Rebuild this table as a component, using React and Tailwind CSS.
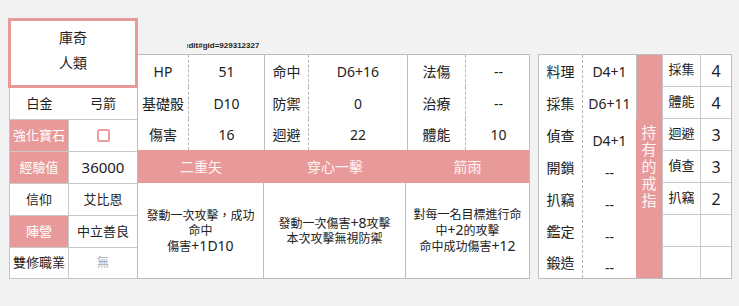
import React from 'react';

const PINK = 'bg-[#e89a9a]';

const stats = [
  [['HP', '51'], ['命中', 'D6+16'], ['法傷', '--']],
  [['基礎骰', 'D10'], ['防禦', '0'], ['治療', '--']],
  [['傷害', '16'], ['迴避', '22'], ['體能', '10']],
];

const groupWidths = [
  ['w-[51px]', 'w-[75px]'],
  ['w-[44px]', 'w-[98px]'],
  ['w-[58px]', 'w-[65px]'],
];

const skills = [
  { name: '二重矢', w: 'w-[126px]' },
  { name: '穿心一擊', w: 'w-[142px]' },
  { name: '箭雨', w: 'w-[123px]' },
];

const jobSkills = ['料理', '採集', '偵查', '開鎖', '扒竊', '鑑定', '鍛造'];
const jobValues = ['D4+1', 'D6+11', 'D4+1', '--', '--', '--', '--'];

const ringBonus = [
  ['採集', '4'],
  ['體能', '4'],
  ['迴避', '3'],
  ['偵查', '3'],
  ['扒竊', '2'],
  ['', ''],
  ['', ''],
];

const Num = ({ children }) => <span className="text-[14px]">{children}</span>;

function ProfileColumn() {
  return (
    <div className="w-[130px] flex flex-col">
      <div className="relative z-10 h-[70px] border-[3px] border-[#e89a9a] bg-white flex flex-col items-center text-[14px] leading-[20px] pt-[7px]">
        <div>庫奇</div>
        <div className="mt-[5px]">人類</div>
      </div>
      <div className="ml-px w-[128px] border-l border-[#c4c4c4] bg-white text-[13px]">
        <div className="h-[32px] flex border-b border-[#c8c8c8]">
          <div className="w-[59px] flex items-center justify-center">白金</div>
          <div className="flex-1 flex items-center justify-center">弓箭</div>
        </div>
        <div className="h-[32px] flex border-b border-[#c8c8c8]">
          <div className={`w-[59px] ${PINK} text-white border-r border-[#c8c8c8] flex items-center justify-center`}>強化寶石</div>
          <div className="flex-1 flex items-center justify-center">
            <div className="w-[13px] h-[13px] border-2 border-[#ee9d9d] rounded-[2px] bg-white" />
          </div>
        </div>
        <div className="h-[32px] flex border-b border-[#c8c8c8]">
          <div className={`w-[59px] ${PINK} text-white border-r border-[#c8c8c8] flex items-center justify-center`}>經驗值</div>
          <div className="flex-1 flex items-center justify-center text-[15px]">36000</div>
        </div>
        <div className="h-[32px] flex border-b border-[#c8c8c8]">
          <div className="w-[59px] border-r border-[#c8c8c8] flex items-center justify-center">信仰</div>
          <div className="flex-1 flex items-center justify-center">艾比恩</div>
        </div>
        <div className="h-[32px] flex border-b border-[#c8c8c8]">
          <div className={`w-[59px] ${PINK} text-white border-r border-[#c8c8c8] flex items-center justify-center`}>陣營</div>
          <div className="flex-1 flex items-center justify-center">中立善良</div>
        </div>
        <div className="h-[31px] flex border-b border-[#c4c4c4]">
          <div className="w-[59px] border-r border-[#c8c8c8] flex items-center justify-center">雙修職業</div>
          <div className="flex-1 flex items-center justify-center text-[12px] text-[#aaa]">無</div>
        </div>
      </div>
    </div>
  );
}

function CombatTable() {
  return (
    <div className="-ml-px w-[393px] flex flex-col">
      <div className="h-[36px] flex items-end pb-[4px] pl-[50px]">
        <div className="overflow-hidden">
          <div className="-ml-[3px] text-[8px] leading-[8px] font-bold font-['Liberation_Sans',sans-serif] text-[#222]">edit#gid=929312327</div>
        </div>
      </div>
      <div className="border border-[#bdbdbd] bg-white">
        {stats.map((row, i) => (
          <div key={i} className={`flex ${i === 2 ? 'h-[31px]' : 'h-[32px]'}`}>
            {row.map(([label, value], g) => (
              <div key={label} className={`flex ${g < 2 ? 'border-r border-[#bdbdbd]' : ''}`}>
                <div className={`${groupWidths[g][0]} border-r border-dashed border-[#b5b5b5] flex items-center justify-center text-[14px]`}>
                  {label}
                </div>
                <div className={`${g < 2 ? 'flex-1' : ''} ${groupWidths[g][1]} flex items-center justify-center text-[14px]`}>
                  {value}
                </div>
              </div>
            ))}
          </div>
        ))}
        <div className={`h-[33px] flex ${PINK} text-[14px] text-[#fff4f4]`}>
          {skills.map((s) => (
            <div key={s.name} className={`${s.w} flex items-center justify-center`}>{s.name}</div>
          ))}
        </div>
        <div className="h-[95px] flex text-[12px] leading-[15px] text-center">
          <div className="w-[126px] border-r border-[#bdbdbd] flex items-center justify-center">
            <div>發動一次攻擊，成功<br />命中<br />傷害<Num>+1D10</Num></div>
          </div>
          <div className="w-[142px] border-r border-[#bdbdbd] flex items-center justify-center">
            <div>發動一次傷害<Num>+8</Num>攻擊<br />本次攻擊無視防禦</div>
          </div>
          <div className="w-[123px] flex items-center justify-center">
            <div>對每一名目標進行命<br />中<Num>+2</Num>的攻擊<br />命中成功傷害<Num>+12</Num></div>
          </div>
        </div>
      </div>
    </div>
  );
}

function JobTable() {
  return (
    <div className="ml-[8px] mt-[36px] w-[194px] h-[225px] border border-[#bdbdbd] bg-white flex text-[14px]">
      <div className="w-[44px] border-r border-dashed border-[#b5b5b5] flex flex-col">
        {jobSkills.map((s, i) => (
          <div key={s} className={`${i === 6 ? 'h-[31px]' : 'h-[32px]'} flex items-center justify-center`}>{s}</div>
        ))}
      </div>
      <div className="w-[53px] flex flex-col">
        {jobValues.map((v, i) => (
          <div
            key={i}
            className={`${i === 6 ? 'h-[31px]' : 'h-[32px]'} flex items-center justify-center ${i > 1 ? 'pt-[10px]' : ''}`}
          >
            {v}
          </div>
        ))}
      </div>
      <div className={`relative w-[26px] ${PINK} flex flex-col items-center justify-center text-[15px] leading-[17px] text-[#fff4f4]`}>
        <div className="absolute left-0 top-0 w-px h-[64px] bg-[#bdbdbd]" />
        {'持有的戒指'.split('').map((c) => (
          <span key={c}>{c}</span>
        ))}
      </div>
      <div className="flex-1 border-l border-[#c8c8c8] flex flex-col">
        {ringBonus.map(([label, value], i) => (
          <div key={i} className={`flex ${i === 6 ? 'h-[31px]' : 'h-[32px] border-b border-[#c8c8c8]'}`}>
            <div className="w-[38px] border-r border-[#c8c8c8] flex items-center justify-center text-[13px] pb-[2px]">{label}</div>
            <div className="flex-1 flex items-center justify-center text-[16px]">{value}</div>
          </div>
        ))}
      </div>
    </div>
  );
}

export default function App() {
  return (
    <div className="w-[739px] h-[306px] bg-[#f2f2f2] text-[#222] font-['Noto_Sans','Noto_Sans_CJK_TC',sans-serif] overflow-hidden">
      <div className="flex items-start pl-[8px] pt-[18px]">
        <ProfileColumn />
        <CombatTable />
        <JobTable />
      </div>
    </div>
  );
}
